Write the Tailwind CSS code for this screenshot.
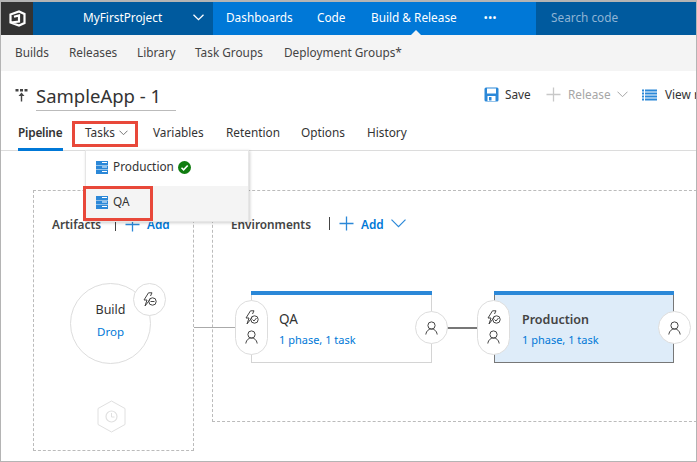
<!DOCTYPE html>
<html lang="en">
<head>
  <meta charset="UTF-8">
  <title>SampleApp - 1</title>
  <script src="https://cdn.jsdelivr.net/npm/@tailwindcss/browser@4"></script>
</head>
<body class="bg-white">
  <div class="relative w-[697px] h-[462px] overflow-hidden border-l border-r border-t-2 border-b border-[#b4b4b4] bg-white font-['Noto_Sans',sans-serif] text-[11.8px] text-[#333]">

    <!-- top bar -->
    <div class="flex h-[33px] bg-[#0078d7] text-white">
      <div class="w-[32px] bg-[#333] flex items-center justify-center">
        <svg width="17" height="17" viewBox="0 0 17 17" fill="none" stroke="white" stroke-width="2.2"><path d="M1.5 4.5 L10 1.5 L15.5 4 V13 L10 15.5 L1.5 12.5 Z M1.5 12.5 L10 11.5 V5.5 L5 6.8"/></svg>
      </div>
      <div class="w-[180px] bg-[#005a9e] flex items-center pl-[50px] pb-[2px]">
        <span class="w-[80px]">MyFirstProject</span>
        <svg class="ml-[30px]" width="11" height="7" viewBox="0 0 11 7" fill="none" stroke="white" stroke-width="1.3"><path d="M0.5 0.7 L5.5 5.7 L10.5 0.7"/></svg>
      </div>
      <div class="relative w-[323px] flex items-center pl-[13px] pb-[2px]">
        <span class="w-[66px]">Dashboards</span>
        <span class="ml-[25px] w-[29px]">Code</span>
        <span class="ml-[25px] w-[88px]">Build &amp; Release</span>
        <span class="ml-[25px] font-bold tracking-[1px] text-[9px] leading-none">•••</span>
        <div class="absolute left-[198px] bottom-0 w-0 h-0 border-l-[5px] border-r-[5px] border-b-[5px] border-l-transparent border-r-transparent border-b-[#f4f4f4]"></div>
      </div>
      <div class="flex-1 bg-[#005a9e] flex items-center pl-[15px] pb-[2px] text-[#8fb4d4]">Search code</div>
    </div>

    <!-- sub nav -->
    <div class="flex items-center h-[36px] bg-[#f4f4f4] pl-[14px] text-[#444]">
      <span class="w-[33px]">Builds</span>
      <span class="ml-[21px] w-[47px]">Releases</span>
      <span class="ml-[21px] w-[37px]">Library</span>
      <span class="ml-[21px] w-[68px]">Task Groups</span>
      <span class="ml-[21px]">Deployment Groups*</span>
    </div>

    <!-- title row -->
    <div class="flex items-start h-[44px] whitespace-nowrap">
      <svg class="shrink-0 ml-[14px] mt-[17px]" width="13" height="14" viewBox="0 0 13 14" fill="#444"><rect x="0.5" y="1" width="3" height="2.5"/><rect x="5" y="1" width="3" height="2.5"/><rect x="9.5" y="1" width="3" height="2.5"/><path d="M6.5 4.5 L9.5 8 H7.2 V13.5 H5.8 V8 H3.5 Z"/></svg>
      <div class="shrink-0 ml-[8px] mt-[10px] w-[140px] h-[30px] border-b border-[#bbb] text-[18.5px] leading-[29px] text-[#333]">SampleApp - 1</div>
      <div class="shrink-0 ml-[308px] mt-[15px] flex items-center">
        <svg class="shrink-0" width="15" height="15" viewBox="0 0 15 15"><rect x="0.5" y="0.5" width="14" height="14" rx="1.5" fill="#2b88d8"/><rect x="3" y="1.5" width="9" height="5" fill="white"/><rect x="3.5" y="9" width="8" height="5" fill="white"/><rect x="5" y="10" width="2.5" height="3.5" fill="#2b88d8"/></svg>
        <span class="ml-[6px] w-[26px]">Save</span>
        <svg class="shrink-0 ml-[15px]" width="15" height="15" viewBox="0 0 15 15" stroke="#c8c8c8" stroke-width="1.3"><path d="M7.5 0.5 V14.5 M0.5 7.5 H14.5"/></svg>
        <span class="ml-[7px] w-[42px] text-[#a6a6a6]">Release</span>
        <svg class="shrink-0 ml-[7px]" width="11" height="7" viewBox="0 0 11 7" fill="none" stroke="#a6a6a6"><path d="M0.5 0.7 L5.5 5.7 L10.5 0.7"/></svg>
        <svg class="shrink-0 ml-[14px]" width="15" height="12" viewBox="0 0 15 12" fill="#2b88d8"><rect x="0" y="0.5" width="2" height="2"/><rect x="3" y="0.5" width="12" height="2"/><rect x="0" y="3.5" width="2" height="2"/><rect x="3" y="3.5" width="12" height="2"/><rect x="0" y="6.5" width="2" height="2"/><rect x="3" y="6.5" width="12" height="2"/><rect x="0" y="9.5" width="2" height="2"/><rect x="3" y="9.5" width="12" height="2"/></svg>
        <span class="ml-[8px]">View r</span>
      </div>
    </div>

    <!-- tabs -->
    <div class="flex items-start h-[36px] pl-[17px] border-b border-[#dcdcdc]">
      <div class="w-[45px] h-[36px] border-b-[3px] border-[#0078d7] pt-[8px] font-semibold leading-[18px] tracking-[-0.2px]">Pipeline</div>
      <div class="ml-[22px] w-[46px] pt-[8px] leading-[18px] flex items-center">Tasks
        <svg class="ml-[4px] mt-[2px]" width="9" height="6" viewBox="0 0 9 6" fill="none" stroke="#777"><path d="M0.5 0.7 L4.5 4.7 L8.5 0.7"/></svg>
      </div>
      <div class="ml-[22px] w-[52px] pt-[8px] leading-[18px]">Variables</div>
      <div class="ml-[21px] w-[54px] pt-[8px] leading-[18px]">Retention</div>
      <div class="ml-[21px] w-[44px] pt-[8px] leading-[18px]">Options</div>
      <div class="ml-[22px] pt-[8px] leading-[18px]">History</div>
    </div>

    <!-- pipeline canvas, x/y offsets below are relative to the page frame -->
    <div class="absolute left-[-1px] top-[-2px] w-[697px] h-[462px]">
      <div class="absolute left-[33px] top-[190px] w-[161px] h-[261px] border border-dashed border-[#bbb]"></div>
      <div class="absolute left-[212px] top-[190px] w-[490px] h-[232px] border border-dashed border-[#bbb]"></div>

      <div class="absolute left-[52px] top-[215px] font-semibold text-[#444] leading-[18px]">Artifacts</div>
      <div class="absolute left-[115px] top-[218px] w-px h-[13px] bg-[#444]"></div>
      <svg class="absolute left-[125px] top-[217px]" width="15" height="15" viewBox="0 0 15 15" stroke="#2b88d8" stroke-width="1.3"><path d="M7.5 0.5 V14.5 M0.5 7.5 H14.5"/></svg>
      <div class="absolute left-[147px] top-[215px] font-semibold text-[#0078d7] leading-[18px]">Add</div>

      <div class="absolute left-[231px] top-[215px] font-semibold text-[#444] leading-[18px]">Environments</div>
      <div class="absolute left-[329px] top-[217px] w-px h-[13px] bg-[#444]"></div>
      <svg class="absolute left-[339px] top-[216px]" width="15" height="15" viewBox="0 0 15 15" stroke="#2b88d8" stroke-width="1.3"><path d="M7.5 0.5 V14.5 M0.5 7.5 H14.5"/></svg>
      <div class="absolute left-[361px] top-[215px] font-semibold text-[#0078d7] leading-[18px]">Add</div>
      <svg class="absolute left-[391px] top-[219px]" width="15" height="9" viewBox="0 0 15 9" fill="none" stroke="#2b88d8" stroke-width="1.2"><path d="M0.5 0.7 L7.5 7.7 L14.5 0.7"/></svg>

      <!-- connectors -->
      <div class="absolute left-[194px] top-[327px] w-[44px] h-px bg-[#aaa]"></div>
      <div class="absolute left-[447px] top-[327px] w-[48px] h-[2px] bg-[#777]"></div>

      <!-- artifact -->
      <div class="absolute left-[70px] top-[283px] w-[81px] h-[81px] rounded-full border border-[#ddd] bg-white flex flex-col items-center pt-[17px]">
        <span class="text-[12.5px] leading-[18px]">Build</span>
        <span class="mt-[5px] text-[11.5px] leading-[16px] text-[#0078d7]">Drop</span>
      </div>
      <div class="absolute left-[133px] top-[283px] w-[33px] h-[33px] rounded-full border border-[#ddd] bg-white flex items-center justify-center">
        <svg width="15" height="15" viewBox="0 0 15 15" fill="none" stroke="#444"><path d="M6.5 0.8 L2 8 H5 L3 14 L8 7.5"/><path d="M6.5 0.8 H10 L8.5 4"/><circle cx="10.5" cy="9.5" r="3.7"/><path d="M8.5 9.5 H12.5"/></svg>
      </div>
      <svg class="absolute left-[97px] top-[400px]" width="29" height="33" viewBox="0 0 29 33" fill="none" stroke="#e0e0e0"><path d="M14.5 1 L28 8.5 V24.5 L14.5 32 L1 24.5 V8.5 Z"/><circle cx="14.5" cy="16.5" r="5.5" stroke-width="1.2"/><path d="M14.5 13 V17 H17.5"/></svg>

      <!-- QA -->
      <div class="absolute left-[251px] top-[291px] w-[181px] h-[72px] border border-t-0 border-[#d4d4d4] bg-white">
        <div class="h-[4px] -mx-px bg-[#2b88d8]"></div>
        <div class="pl-[27px] pt-[15px] text-[13.5px] leading-[18px]">QA</div>
        <div class="pl-[27px] mt-[4px] text-[11px] leading-[16px] text-[#0078d7]">1 phase, 1 task</div>
      </div>
      <div class="absolute left-[235px] top-[300px] w-[33px] h-[55px] rounded-full border border-[#ddd] bg-white flex flex-col items-center pt-[9px]">
        <svg width="15" height="15" viewBox="0 0 15 15" fill="none" stroke="#444"><path d="M6.5 0.8 L2 8 H5 L3 14 L8 7.5"/><path d="M6.5 0.8 H10 L8.5 4"/><circle cx="10.5" cy="9.5" r="3.7"/><path d="M8.5 9.5 L10 11 L12.5 8"/></svg>
        <svg class="mt-[5px]" width="13" height="14" viewBox="0 0 13 14" fill="none" stroke="#444"><circle cx="6.5" cy="4.5" r="3.6"/><path d="M0.8 13.5 C1.5 9.5 4 8 6.5 8 C9 8 11.5 9.5 12.2 13.5"/></svg>
      </div>
      <div class="absolute left-[415px] top-[311px] w-[33px] h-[33px] rounded-full border border-[#ddd] bg-white flex items-center justify-center">
        <svg width="13" height="14" viewBox="0 0 13 14" fill="none" stroke="#444"><circle cx="6.5" cy="4.5" r="3.6"/><path d="M0.8 13.5 C1.5 9.5 4 8 6.5 8 C9 8 11.5 9.5 12.2 13.5"/></svg>
      </div>

      <!-- Production -->
      <div class="absolute left-[494px] top-[291px] w-[180px] h-[72px] border border-t-0 border-[#777] bg-[#deecf9]">
        <div class="h-[4px] -mx-px bg-[#2b88d8]"></div>
        <div class="pl-[27px] pt-[16px] text-[12.5px] font-semibold leading-[18px] text-[#444]">Production</div>
        <div class="pl-[27px] mt-[3px] text-[11px] leading-[16px] text-[#0078d7]">1 phase, 1 task</div>
      </div>
      <div class="absolute left-[477px] top-[300px] w-[33px] h-[55px] rounded-full border border-[#ddd] bg-white flex flex-col items-center pt-[9px]">
        <svg width="15" height="15" viewBox="0 0 15 15" fill="none" stroke="#444"><path d="M6.5 0.8 L2 8 H5 L3 14 L8 7.5"/><path d="M6.5 0.8 H10 L8.5 4"/><circle cx="10.5" cy="9.5" r="3.7"/><path d="M8.5 9.5 L10 11 L12.5 8"/></svg>
        <svg class="mt-[5px]" width="13" height="14" viewBox="0 0 13 14" fill="none" stroke="#444"><circle cx="6.5" cy="4.5" r="3.6"/><path d="M0.8 13.5 C1.5 9.5 4 8 6.5 8 C9 8 11.5 9.5 12.2 13.5"/></svg>
      </div>
      <div class="absolute left-[658px] top-[311px] w-[33px] h-[33px] rounded-full border border-[#ddd] bg-white flex items-center justify-center">
        <svg width="13" height="14" viewBox="0 0 13 14" fill="none" stroke="#444"><circle cx="6.5" cy="4.5" r="3.6"/><path d="M0.8 13.5 C1.5 9.5 4 8 6.5 8 C9 8 11.5 9.5 12.2 13.5"/></svg>
      </div>

      <!-- tasks dropdown -->
      <div class="absolute left-[85px] top-[150px] w-[164px] h-[72px] bg-white border border-[#e6e6e6] shadow-[1px_1px_3px_rgba(0,0,0,0.2)]">
        <div class="flex items-center h-[35px] pl-[10px] pb-[3px]">
          <svg width="12" height="13" viewBox="0 0 12 13" fill="#2b88d8"><rect width="12" height="4"/><rect y="4.5" width="12" height="4"/><rect y="9" width="12" height="4"/><rect x="6" y="1" width="5" height="1" fill="white"/><rect x="6" y="5.5" width="5" height="1" fill="white"/><rect x="6" y="10" width="5" height="1" fill="white"/></svg>
          <span class="ml-[5px] w-[61px]">Production</span>
          <svg class="ml-[4px]" width="13" height="13" viewBox="0 0 13 13"><circle cx="6.5" cy="6.5" r="6.5" fill="#107c10"/><path d="M3.5 6.8 L5.6 8.9 L9.7 4.5" fill="none" stroke="white" stroke-width="1.6"/></svg>
        </div>
        <div class="flex items-center h-[35px] pl-[10px] pb-[3px] bg-[#f4f4f4]">
          <svg width="12" height="13" viewBox="0 0 12 13" fill="#2b88d8"><rect width="12" height="4"/><rect y="4.5" width="12" height="4"/><rect y="9" width="12" height="4"/><rect x="6" y="1" width="5" height="1" fill="white"/><rect x="6" y="5.5" width="5" height="1" fill="white"/><rect x="6" y="10" width="5" height="1" fill="white"/></svg>
          <span class="ml-[5px]">QA</span>
        </div>
      </div>

      <!-- callouts -->
      <div class="absolute left-[72px] top-[121px] w-[66px] h-[26px] border-[3px] border-[#e8483a]"></div>
      <div class="absolute left-[83px] top-[186px] w-[70px] h-[35px] border-[3px] border-[#e8483a]"></div>
    </div>
  </div>
</body>
</html>
